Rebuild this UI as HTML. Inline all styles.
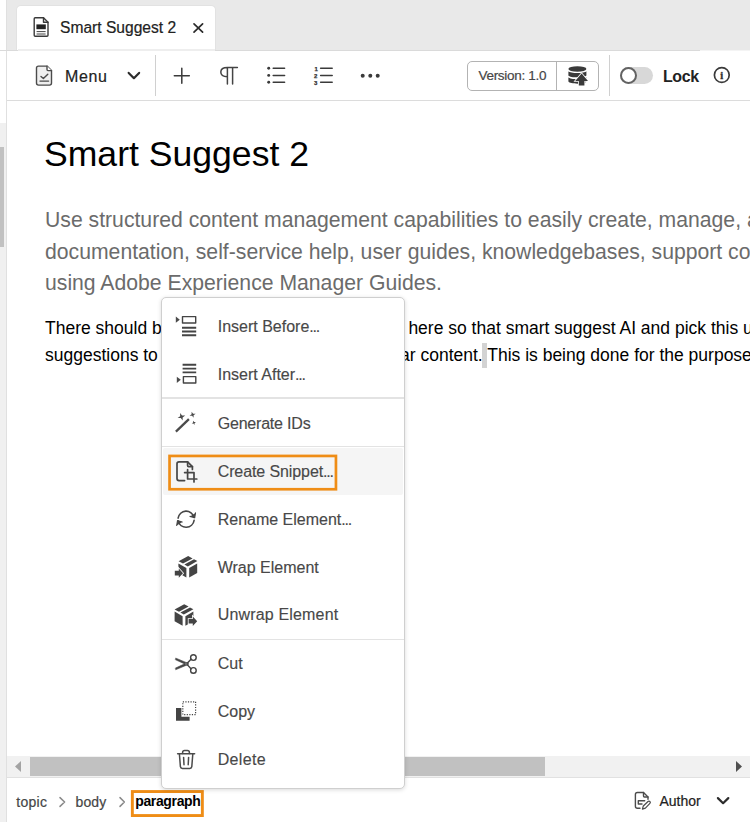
<!DOCTYPE html>
<html lang="en">
<head>
<meta charset="utf-8">
<title>Smart Suggest 2</title>
<style>
*{box-sizing:border-box;margin:0;padding:0}
html,body{width:750px;height:822px;overflow:hidden;background:#fff}
body{position:relative;font-family:"Liberation Sans",sans-serif;color:#222}
.abs{position:absolute}
.t{position:absolute;white-space:nowrap;line-height:1}
svg.ov{position:absolute;left:0;top:0;width:750px;height:822px;overflow:visible}
svg text{font-family:"Liberation Sans",sans-serif}
/* chrome */
#tabbar{left:7px;top:0;width:743px;height:50px;background:#e9e9e9}
#vline{left:5.8px;top:0;width:1.2px;height:822px;background:#e0e0e0}
#tab{left:16.3px;top:4.6px;width:200.2px;height:45.4px;background:#fff;border-radius:5px 5px 0 0;border:1px solid #e2e2e2;border-bottom:0}
#tabline{left:0;top:49.5px;width:750px;height:1px;background:#dadada}
#toolline{left:7px;top:100px;width:743px;height:1px;background:#dcdcdc}
.vsep{width:1px;background:#d0d0d0;top:55px;height:41px}
#leftstrip{left:0;top:123px;width:5.6px;height:699px;background:#f0f0f0}
#leftthumb{left:0;top:147px;width:4px;height:100px;background:#c1c1c1}
/* content */
#title{left:44px;top:134px;font-size:35.6px;color:#000;line-height:41px}
#sd{left:45px;top:204.2px;font-size:21.2px;line-height:31.6px;color:#6b6b6b;white-space:nowrap}
.p{position:absolute;font-size:17.5px;line-height:27px;color:#000;white-space:nowrap}
/* scrollbar */
#hs{left:7px;top:756px;width:743px;height:21px;background:#f1f1f1}
#hsthumb{left:30px;top:757px;width:515px;height:19px;background:#c1c1c1}
#hsline{left:7px;top:777px;width:743px;height:1px;background:#e1e1e1}
/* menu */
#menu{left:161px;top:296.5px;width:244.4px;height:492px;background:#fff;border:1px solid #cfcfcf;border-radius:5px;box-shadow:0 1px 4.5px rgba(0,0,0,.15)}
.mi{position:absolute;left:217.7px;font-size:16px;color:#484848;white-space:nowrap;line-height:20px;-webkit-text-stroke:0.15px #484848}
.mi i{font-style:normal;letter-spacing:-1.2px}
.msep{position:absolute;left:162px;width:242px;height:1.2px;background:#e3e3e3}
</style>
</head>
<body>
<div class="abs" id="tabbar"></div>
<div class="abs" id="vline"></div>
<div class="abs" id="tab"></div>
<div class="abs" id="tabline"></div>
<div class="abs" style="left:700px;top:49px;width:50px;height:2px;background:linear-gradient(#e9e9e9,#e9e9e9 50%,#f4f4f4 50%)"></div>
<div class="abs" style="left:18px;top:49px;width:197px;height:2px;background:#eee"></div>
<div class="t" style="left:60px;top:20.2px;font-size:15.6px;letter-spacing:0;color:#222;-webkit-text-stroke:0.2px #222">Smart Suggest 2</div>
<div class="abs" id="toolline"></div>
<div class="abs vsep" style="left:155px;width:1.3px"></div>
<div class="abs vsep" style="left:608.6px;width:1.5px"></div>
<div class="t" style="left:65px;top:69px;font-size:16px;letter-spacing:0.6px;color:#222;-webkit-text-stroke:0.2px #222">Menu</div>
<div class="abs" style="left:467px;top:61px;width:132px;height:30px;border:1px solid #b3b3b3;border-radius:5px"></div>
<div class="abs" style="left:556px;top:62px;width:1px;height:28px;background:#b3b3b3"></div>
<div class="t" style="left:478.5px;top:68.5px;font-size:13.5px;letter-spacing:-0.3px;color:#464646;-webkit-text-stroke:0.2px #464646">Version: 1.0</div>
<div class="abs" style="left:620px;top:66.5px;width:33px;height:17px;border-radius:9px;background:#d8d8d8"></div>
<div class="abs" style="left:620px;top:66.5px;width:17px;height:17px;border-radius:9px;background:#fff;border:2px solid #626262"></div>
<div class="t" style="left:663px;top:69px;font-size:16px;letter-spacing:-0.4px;font-weight:bold;color:#222">Lock</div>

<div class="abs" id="leftstrip"></div>
<div class="abs" id="leftthumb"></div>

<div class="t" id="title">Smart Suggest 2</div>
<div class="abs" id="sd">Use structured content management capabilities to easily create, manage, and deliver product<br>documentation, self-service help, user guides, knowledgebases, support content, and more<br>using Adobe Experience Manager Guides.</div>
<div class="p" style="left:45px;top:314.6px">There should be some relevant and meaning</div>
<div class="p" style="left:408.4px;top:314.6px">here so that smart suggest AI and pick this up and show</div>
<div class="p" style="left:45px;top:341.6px">suggestions to link it with some other</div>
<div class="abs" style="left:482.3px;top:342.5px;width:4.6px;height:25.8px;background:#d3d3d3"></div>
<div class="p" style="left:400px;top:341.6px">ar content. This is being done for the purpose of testing.</div>

<div class="abs" id="hs"></div>
<div class="abs" id="hsthumb"></div>
<div class="abs" id="hsline"></div>

<div class="t" style="left:16.2px;top:794.5px;font-size:14px;letter-spacing:0.3px;color:#464646;-webkit-text-stroke:0.2px #464646">topic</div>
<div class="t" style="left:75.5px;top:794.5px;font-size:14px;letter-spacing:0.1px;color:#464646;-webkit-text-stroke:0.2px #464646">body</div>

<div class="t" style="left:135.2px;top:794.3px;font-size:14px;letter-spacing:-0.35px;font-weight:bold;color:#000">paragraph</div>
<div class="t" style="left:659.4px;top:793.8px;font-size:14px;color:#222;-webkit-text-stroke:0.2px #222">Author</div>

<svg class="ov" viewBox="0 0 750 822" fill="none" stroke-linecap="round" stroke-linejoin="round">
 <!-- tab doc icon -->
 <g stroke="#3a3a3a" stroke-width="1.4">
  <path d="M35.2 17.7H43.5L48 22.2V35.3a1 1 0 0 1-1 1H35.2a1 1 0 0 1-1-1V18.7a1 1 0 0 1 1-1Z"/>
  <path d="M43.5 17.7V22.2H48"/>
 </g>
 <rect x="36.4" y="24.4" width="9.4" height="4.8" fill="#222"/>
 <path d="M36.6 31.6H45.6M36.6 34H45.6" stroke="#444" stroke-width="1" stroke-linecap="butt"/>
 <!-- tab close -->
 <path d="M194 23.8L202.6 32.2M202.6 23.8L194 32.2" stroke="#2c2c2c" stroke-width="1.7"/>
 <!-- menu icon -->
 <g stroke="#4b4b4b" stroke-width="1.4">
  <path d="M38.5 66.1H47L51.5 70.6V83.1a2 2 0 0 1-2 2H38.5a2 2 0 0 1-2-2V68.1a2 2 0 0 1 2-2Z" fill="#efefef"/>
  <path d="M47 66.1V69.6a1 1 0 0 0 1 1H51.5" fill="#fff"/>
  <path d="M41 76.4L43.4 78.6L47.8 74.2M40 81.1H48.6"/>
 </g>
 <!-- chevron -->
 <path d="M128.7 72.9L133.9 78.2L139.1 72.9" stroke="#2c2c2c" stroke-width="2.2"/>
 <!-- plus -->
 <path d="M181.8 68.2V83.2M174.3 75.7H189.3" stroke="#3a3a3a" stroke-width="1.5"/>
 <!-- pilcrow -->
 <path d="M237.4 67.4H227.4C223 67.4 220.8 69.5 220.8 72.1C220.8 74.7 223 76.8 227.4 76.8M227.4 67.4V84M232.6 67.4V84" stroke="#444" stroke-width="1.5"/>
 <!-- bullets -->
 <g fill="#3a3a3a"><circle cx="268.7" cy="68.3" r="1.45"/><circle cx="268.7" cy="75.4" r="1.45"/><circle cx="268.7" cy="82.3" r="1.45"/></g>
 <path d="M273.2 68.3H284.6M273.2 75.4H284.6M273.2 82.3H284.6" stroke="#3a3a3a" stroke-width="1.5"/>
 <!-- numbered -->
 <g fill="#333" stroke="#333" stroke-width=".25" font-size="6" font-weight="bold"><text x="314.4" y="70.5">1</text><text x="314" y="77.6">2</text><text x="314" y="84.6">3</text></g>
 <path d="M320.6 68.3H332.2M320.6 75.4H332.2M320.6 82.3H332.2" stroke="#3a3a3a" stroke-width="1.5"/>
 <!-- more -->
 <g fill="#3a3a3a"><circle cx="362.7" cy="75.7" r="2"/><circle cx="370.3" cy="75.7" r="2"/><circle cx="377.7" cy="75.7" r="2"/></g>
 <!-- database + arrow -->
 <g fill="#3a3a3a" stroke="none">
  <ellipse cx="577.4" cy="69" rx="9" ry="2.7"/>
  <path d="M568.4 71.2C570 73.6 584.8 73.6 586.4 71.2V75.4C584.8 78 570 78 568.4 75.4Z"/>
  <path d="M568.4 77.2C570 79.8 584.8 79.8 586.4 77.2V81.6C584.8 84.4 570 84.4 568.4 81.6Z"/>
 </g>
 <path d="M581.6 73.4L588 81H584.4V85.4H578.8V81H575.2Z" fill="#3a3a3a" stroke="#fff" stroke-width="1.6" paint-order="stroke" stroke-linejoin="miter"/>
 <!-- info -->
 <circle cx="721.8" cy="75" r="7.4" stroke="#3a3a3a" stroke-width="1.7"/>
 <text x="721.8" y="78.7" text-anchor="middle" font-size="10.5" font-weight="bold" fill="#333" stroke="#333" stroke-width=".35" style="font-family:'Liberation Serif',serif">i</text>
 <!-- scroll arrows -->
 <path d="M21 761V772L15 766.5Z" fill="#a3a3a3"/>
 <path d="M736 761V772L742 766.5Z" fill="#505050"/>
 <!-- breadcrumb chevrons -->
 <path d="M60 797.6L64.6 802L60 806.4M120 797.6L124.4 802L120 806.4" stroke="#8a8a8a" stroke-width="1.5"/>
 <rect x="132.35" y="791.55" width="70" height="24" stroke="#ef8d16" stroke-width="2.9" stroke-linejoin="miter"/>
 <!-- author icon -->
 <g stroke="#4b4b4b" stroke-width="1.4">
  <path d="M640 808.2H637.4a2 2 0 0 1-2-2V794.5a2 2 0 0 1 2-2H643.5L648 797V799.2"/>
  <path d="M643.5 792.5V796a1 1 0 0 0 1 1H648"/>
  <path d="M644.7 800.7H638.3V804H642"/>
  <path d="M642.4 809.1L643.3 806L648 801.5a1.3 1.3 0 0 1 1.9 1.9L645.4 808.1Z" stroke-width="1.2"/>
 </g>
 <!-- author chevron -->
 <path d="M717.9 798.1L723.1 803.2L728.3 798.1" stroke="#2c2c2c" stroke-width="2.2"/>
</svg>

<div class="abs" id="menu"></div>
<div class="abs" style="left:162.5px;top:447.5px;width:240.6px;height:47.8px;background:#f5f5f5;border-radius:2px"></div>

<div class="msep" style="top:397.4px"></div>
<div class="msep" style="top:446px"></div>
<div class="msep" style="top:638.5px"></div>
<div class="mi" style="top:317px">Insert Before<i>...</i></div>
<div class="mi" style="top:365px">Insert After<i>...</i></div>
<div class="mi" style="top:413.8px;letter-spacing:-0.2px">Generate IDs</div>
<div class="mi" style="top:462.2px;letter-spacing:-0.1px">Create Snippet<i>...</i></div>
<div class="mi" style="top:509.8px">Rename Element<i>...</i></div>
<div class="mi" style="top:557.8px">Wrap Element</div>
<div class="mi" style="top:605.3px;letter-spacing:0.17px">Unwrap Element</div>
<div class="mi" style="top:654.4px">Cut</div>
<div class="mi" style="top:701.8px">Copy</div>
<div class="mi" style="top:750.4px;letter-spacing:0.35px">Delete</div>

<svg class="ov" viewBox="0 0 750 822" fill="none" stroke-linecap="round" stroke-linejoin="round">
 <rect x="169.55" y="455.95" width="166.4" height="33.3" stroke="#ef8d16" stroke-width="2.7" stroke-linejoin="miter"/>
 <!-- insert before -->
 <path d="M175.8 316.6V322.8L179.8 319.7Z" fill="#4b4b4b"/>
 <rect x="182.5" y="316.6" width="13.2" height="6.4" stroke="#444" stroke-width="1.4"/>
 <path d="M182 327.7H196.2M182 331.5H196.2M182 335.3H196.2" stroke="#444" stroke-width="1.9" stroke-linecap="butt"/>
 <!-- insert after -->
 <path d="M182.6 364.8H196.2M182.6 368.6H196.2M182.6 372.4H196.2" stroke="#444" stroke-width="1.9" stroke-linecap="butt"/>
 <rect x="183.4" y="376.6" width="12.4" height="6.4" stroke="#444" stroke-width="1.4"/>
 <path d="M176.8 376.7V382.9L180.8 379.8Z" fill="#4b4b4b"/>
 <!-- wand -->
 <path d="M175.9 431.6L188.9 419.2" stroke="#4b4b4b" stroke-width="2.3" stroke-linecap="butt"/>
 <g fill="#4b4b4b">
  <path d="M181.4 412.8L182.4 415.8L185.4 416.8L182.4 417.8L181.4 420.8L180.4 417.8L177.4 416.8L180.4 415.8Z" transform="rotate(-18 181.4 416.8)"/>
  <path d="M192.6 411.6L193.4 414L195.8 414.8L193.4 415.6L192.6 418L191.8 415.6L189.4 414.8L191.8 414Z" transform="rotate(-18 192.6 414.8)"/>
  <path d="M193.8 420.6L194.4 422.2L196 422.8L194.4 423.4L193.8 425L193.2 423.4L191.6 422.8L193.2 422.2Z" transform="rotate(-18 193.8 422.8)"/>
 </g>
 <!-- snippet -->
 <g stroke="#464646" stroke-width="1.7">
  <path d="M184.6 480.6H179a2 2 0 0 1-2-2V463.8a2 2 0 0 1 2-2H187.6L192.4 466.6V469.4"/>
  <path d="M187.6 461.8V465.6a1 1 0 0 0 1 1H192.4"/>
  <path d="M187.6 469.6V479H196.8M184.6 472.6H194V482"/>
 </g>
 <!-- rename -->
 <g stroke="#464646" stroke-width="1.6">
  <path d="M178.1 518.1A8.1 8.1 0 0 1 194 517.4"/>
  <path d="M195.5 512.9L194.7 517.8L190 516.4" fill="#464646" stroke-width="1.1"/>
  <path d="M194.1 520.4A8.1 8.1 0 0 1 178.2 521"/>
  <path d="M176.7 525.5L177.5 520.6L182.2 522" fill="#464646" stroke-width="1.1"/>
 </g>
 <!-- wrap -->
 <g fill="#444">
  <path d="M188.2 556L192.6 558.4L183 563.6L178.6 561.2Z"/>
  <path d="M194 559.2L197.4 561L187.8 566.4L184.4 564.4Z"/>
  <path d="M178.4 563.4L186.4 568V577.6L178.4 573Z"/>
  <path d="M189.2 568L197.2 563.4V573L189.2 577.6Z"/>
 </g>
 <path d="M174.8 570.8H178.8V568.6L183 573.2L178.8 577.8V575.6H174.8Z" fill="#444" stroke="#fff" stroke-width="1.6" paint-order="stroke" stroke-linejoin="miter"/>
 <!-- unwrap -->
 <g fill="#444">
  <path d="M184.2 604.2L188.6 606.6L179 611.8L174.6 609.4Z"/>
  <path d="M190 607.4L193.4 609.2L183.8 614.6L180.4 612.6Z"/>
  <path d="M174.6 611.6L182.6 616.2V625.8L174.6 621.2Z"/>
  <path d="M185.4 616.2L193.4 611.6V621.2L185.4 625.8Z"/>
 </g>
 <path d="M188.6 619H192.8V616.6L197.2 621.3L192.8 626V623.6H188.6Z" fill="#444" stroke="#fff" stroke-width="1.6" paint-order="stroke" stroke-linejoin="miter"/>
 <!-- cut -->
 <g stroke="#444" stroke-width="1.4">
  <circle cx="193.4" cy="657.6" r="2.8"/>
  <circle cx="193.4" cy="670.4" r="2.8"/>
  <path d="M191 659.2L187 663.4M191 668.8L187 664.4"/>
 </g>
 <path d="M176 658.2L188.4 663.4L187.4 665.2L175.6 659.8Z M176 669.6L188.4 664.4L187.4 662.6L175.6 668Z" fill="#444" stroke="#444" stroke-width=".6"/>
 <!-- copy -->
 <path d="M176 708H181.4V716.8H189.6V720.8H176Z" fill="#444"/>
 <rect x="182.8" y="701.8" width="12.8" height="12.8" stroke="#444" stroke-width="1.2" stroke-dasharray="1.2 1.36" stroke-linecap="butt"/>
 <!-- delete -->
 <g stroke="#4b4b4b" stroke-width="1.5">
  <path d="M177.6 753.8H194.6"/>
  <path d="M182.6 753.6V752.6a2 2 0 0 1 2-2H187.4a2 2 0 0 1 2 2V753.6"/>
  <path d="M179.4 754L180.4 766.6a2 2 0 0 0 2 1.8H189.8a2 2 0 0 0 2-1.8L192.8 754"/>
  <path d="M183.6 757.4L184 764.8M188.6 757.4L188.2 764.8"/>
 </g>
</svg>
</body>
</html>
